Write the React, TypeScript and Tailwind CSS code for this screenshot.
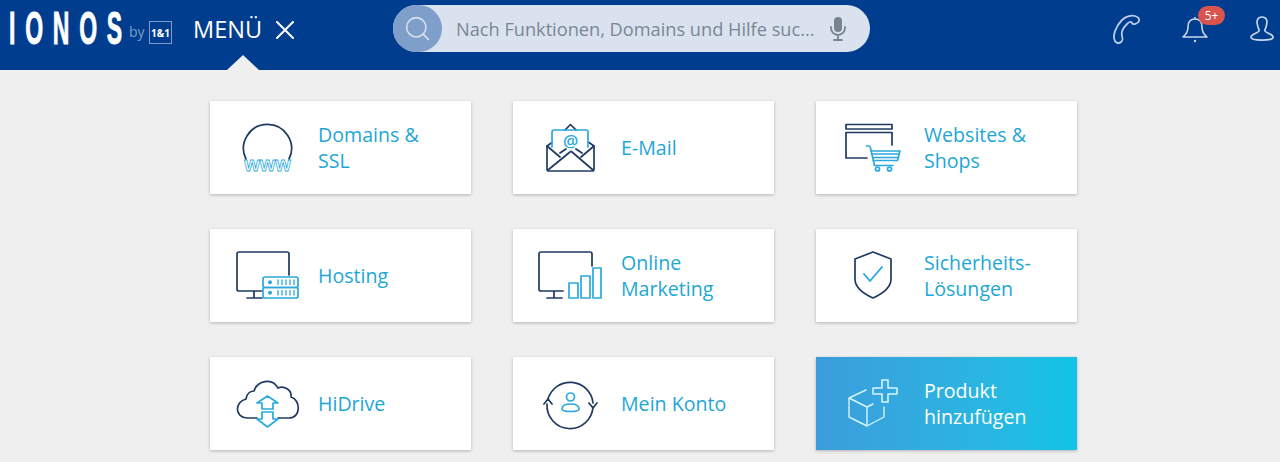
import type { ReactNode } from "react";
import { Search } from "lucide-react";

const DARK = "#1f3a63";
const LIGHT = "#2aa9dc";

// All card icons share one 108x93 box, so coordinates are relative to the card corner.
const Icon = ({ children }: { children: ReactNode }) => (
  <svg viewBox="0 0 108 93" className="h-[93px] w-[108px] shrink-0" fill="none" strokeWidth="1.7" strokeLinecap="round" strokeLinejoin="round" aria-hidden>
    {children}
  </svg>
);

const DomainsIcon = () => (
  <Icon>
    <path d="M36 58 A24 24 0 1 1 79 58" stroke={DARK} />
    <text x="57.5" y="70" textAnchor="middle" fontFamily="'Liberation Sans', sans-serif" fontSize="20" fontWeight="700" fill="#fff" stroke={LIGHT} strokeWidth="0.8">www</text>
  </Icon>
);

const MailIcon = () => (
  <Icon>
    <path d="M34 45 V68 Q34 70 36 70 H79 Q81 70 81 68 V45 M34 45 L39 41.5 M81 45 L76 41.5 M52 29 L57 24 Q57.5 23 58 24 L63 29" stroke={DARK} />
    <path d="M39 46 V31 Q39 29 41 29 H73 Q75 29 75 31 V46" stroke={LIGHT} />
    <path d="M34 45 L47 56 M81 45 L68 56" stroke={DARK} />
    <path d="M35 69 L57 51 Q58 50 59 51 L80 69 M47 52 L53 48 M69 52 L63 48" stroke={DARK} />
    <text x="57.5" y="45.5" textAnchor="middle" fontFamily="'Open Sans', sans-serif" fontSize="17" fontWeight="600" fill={LIGHT}>@</text>
  </Icon>
);

const ShopIcon = () => (
  <Icon>
    <rect x="30" y="23.5" width="46" height="4.5" stroke={DARK} />
    <path d="M30 57 V31.5 H76 V44 M30 57 H51" stroke={DARK} />
    <path d="M50.5 45 H53 Q54 45 54.5 47 L58.5 64.5 H77" stroke={LIGHT} />
    <path d="M55 50 H84 L81.5 59.5 H57.5 M56 53 H83 M57 56.5 H82" stroke={LIGHT} />
    <circle cx="61.5" cy="68" r="2" stroke={LIGHT} />
    <circle cx="73.5" cy="68" r="2" stroke={LIGHT} />
  </Icon>
);

const HostingIcon = () => (
  <Icon>
    <path d="M52 62 H29 Q27 62 27 60 V25 Q27 23 29 23 H77 Q79 23 79 25 V46 M44 62 V69 M37 69 H52" stroke={DARK} />
    <rect x="53" y="48" width="35" height="10.5" rx="2" stroke={LIGHT} />
    <rect x="53" y="58.5" width="35" height="10.5" rx="2" stroke={LIGHT} />
    <circle cx="60" cy="53.2" r="1.2" fill={LIGHT} stroke={LIGHT} />
    <circle cx="60" cy="63.8" r="1.2" fill={LIGHT} stroke={LIGHT} />
    <path d="M68 51 V55.5 M72 51 V55.5 M76 51 V55.5 M80 51 V55.5 M84 51 V55.5 M68 61.5 V66 M72 61.5 V66 M76 61.5 V66 M80 61.5 V66 M84 61.5 V66" stroke={LIGHT} strokeWidth="1.3" />
  </Icon>
);

const MarketingIcon = () => (
  <Icon>
    <path d="M50 62 H28 Q26 62 26 60 V25 Q26 23 28 23 H77 Q79 23 79 25 V37 M41 62 V69 M34 69 H49" stroke={DARK} />
    <rect x="56" y="54" width="9" height="15" stroke={LIGHT} />
    <rect x="68" y="47" width="9" height="22" stroke={LIGHT} />
    <rect x="80" y="39" width="8" height="30" stroke={LIGHT} />
  </Icon>
);

const ShieldIcon = () => (
  <Icon>
    <path d="M57 23 L75 30 V50 Q75 61 57 69 Q39 61 39 50 V30 Z" stroke={DARK} />
    <path d="M48 45 L54 52 L66 38" stroke={LIGHT} strokeWidth="1.9" />
  </Icon>
);

const CloudIcon = () => (
  <Icon>
    <path d="M47 61 H37 C25 61 24 45 36 42 C37 36 41 34 44 34 C47 24 62 20 68 31 C74 28 82 33 81 40 C91 43 91 61 79 61 H68" stroke={DARK} />
    <path d="M47 46 L57.5 39 L68 46 H63 V52 H52 V46 Z" stroke={LIGHT} />
    <path d="M52 55 H63 V62 H68 L57.5 70 L47 62 H52 Z" stroke={LIGHT} />
  </Icon>
);

const AccountIcon = () => (
  <Icon>
    <path d="M80 46 A23 23 0 0 0 35 42" stroke={DARK} />
    <path d="M34 47 A23 23 0 0 0 80 50" stroke={DARK} />
    <path d="M31 47 L35 42 L39 47 M76 46 L80 51 L84 46" stroke={DARK} />
    <circle cx="57.5" cy="40" r="4" stroke={LIGHT} />
    <path d="M49 52 C49 48 53 47 57.5 47 C62 47 66 48 66 52 C66 54 62 54.5 57.5 54.5 C53 54.5 49 54 49 52 Z" stroke={LIGHT} />
  </Icon>
);

const AddIcon = () => (
  <Icon>
    <g stroke="#d8f4fb" strokeWidth="1.4">
      <path d="M50 33 L33 41 L51 50 L57 47 M33 41 V60 L51 69 V50 M51 69 L68 60 V50" />
      <path d="M66 23 H72 V31 H81 V37 H72 V45 H66 V37 H57 V31 H66 Z" strokeWidth="1.6" />
    </g>
  </Icon>
);

const cards = [
  { lines: ["Domains &", "SSL"], icon: <DomainsIcon /> },
  { lines: ["E-Mail"], icon: <MailIcon /> },
  { lines: ["Websites &", "Shops"], icon: <ShopIcon /> },
  { lines: ["Hosting"], icon: <HostingIcon /> },
  { lines: ["Online", "Marketing"], icon: <MarketingIcon /> },
  { lines: ["Sicherheits-", "Lösungen"], icon: <ShieldIcon /> },
  { lines: ["HiDrive"], icon: <CloudIcon /> },
  { lines: ["Mein Konto"], icon: <AccountIcon /> },
  { lines: ["Produkt", "hinzufügen"], icon: <AddIcon />, accent: true },
];

const Logo = () => (
  <div className="flex h-[36px] items-end">
    <svg viewBox="0 0 113 36" className="h-[36px] w-[113px] overflow-visible" aria-label="IONOS">
      <text transform="translate(0 35) scale(0.5 1)" fontFamily="'Liberation Sans', sans-serif" fontSize="46" fontWeight="700" fill="#fff" stroke="#fff" strokeWidth="1">
        <tspan letterSpacing="19.5">IONO</tspan>
        <tspan>S</tspan>
      </text>
    </svg>
    <span className="mb-[5px] ml-[7px] w-[15px] text-[14px] leading-[16px] text-[#7f9dc8]">by</span>
    <span className="mb-px ml-[5px] flex h-[23px] w-[23px] items-center justify-center border border-[#7f9dc8] text-[10px] font-bold leading-none text-white">1&amp;1</span>
  </div>
);

const Header = () => (
  <header className="relative flex h-[70px] items-start overflow-hidden bg-[#003d8f] pl-[9px]">
    <div className="mt-[9px]">
      <Logo />
    </div>
    <span className="ml-[21px] mt-[13px] w-[69px] whitespace-nowrap text-[23.5px] font-medium leading-[33px] text-white">MENÜ</span>
    <svg viewBox="0 0 18 18" className="ml-[14px] mt-[21px] h-[18px] w-[18px]" fill="none" stroke="#fff" strokeWidth="2" strokeLinecap="round" aria-hidden>
      <path d="M1 1 L17 17 M17 1 L1 17" />
    </svg>
    <div className="ml-[99px] mt-[5px] flex h-[47px] w-[477px] items-center rounded-full bg-[#d9e2ee]">
      <span className="flex h-[47px] w-[49px] shrink-0 items-center justify-center rounded-full bg-[#7f9fcb]">
        <Search className="h-[29px] w-[29px] text-[#d9e2ee]" strokeWidth={1.3} />
      </span>
      <span className="ml-[14px] w-[361px] whitespace-nowrap text-[18.2px] leading-[24px] text-[#7b8794]">Nach Funktionen, Domains und Hilfe suc...</span>
      <svg viewBox="0 0 16 24" className="ml-[13px] h-[24px] w-[16px]" fill="none" stroke="#78838f" strokeWidth="1.8" strokeLinecap="round" aria-hidden>
        <rect x="4" y="0" width="8" height="15" rx="4" fill="#78838f" stroke="none" />
        <path d="M1 10 V11 A7 7 0 0 0 15 11 V10 M8 18 V23 M4 23 H12" />
      </svg>
    </div>
    <svg viewBox="0 0 32 32" className="ml-[241px] mt-[14px] h-[32px] w-[32px]" fill="none" stroke="#b9cde6" strokeWidth="1.8" strokeLinejoin="round" aria-hidden>
      <path d="M4 27 C1 22 5 12 11 6 C15 2 21 1 24 2 C27 3 29 5 28 7 C27 10 22 11 21 9 C20 7 18 8 16 10 C12 14 10 19 11 22 C12 25 12 26 10 28 C8 30 5 29 4 27 Z" />
    </svg>
    <div className="relative ml-[37px] mt-[15px] h-[30px] w-[30px]">
      <svg viewBox="0 0 30 30" className="h-[30px] w-[30px]" fill="none" stroke="#c9d8ec" strokeWidth="1.6" strokeLinejoin="round" aria-hidden>
        <path d="M3 22 Q8 18 8 12 Q8 4 15 4 Q22 4 22 12 Q22 18 27 22 Z M15 2 V4" />
        <circle cx="15" cy="26" r="1.2" fill="#c9d8ec" stroke="none" />
      </svg>
      <span className="absolute left-[18px] top-[-9px] flex h-[19px] w-[27px] items-center justify-center rounded-full bg-[#d9534f] text-[12px] leading-none text-white">5+</span>
    </div>
    <svg viewBox="0 0 26 30" className="ml-[40px] mt-[15px] h-[28px] w-[24px]" fill="none" stroke="#c9d8ec" strokeWidth="1.8" strokeLinejoin="round" aria-hidden>
      <path d="M13 2 C8 2 7 6 8 10 C8.5 14 10 15 10 17 C10 19 1 20 1 24 C1 26 5 27 13 27 C21 27 25 26 25 24 C25 20 16 19 16 17 C16 15 17.5 14 18 10 C19 6 18 2 13 2 Z" />
    </svg>
    {/* Caret pointing at the open menu */}
    <span className="absolute bottom-0 left-[227px] h-0 w-0 border-x-[16px] border-b-[15px] border-x-transparent border-b-[#efefef]" />
  </header>
);

export default function App() {
  return (
    <div className="h-[462px] overflow-hidden bg-[#efefef] font-['Open_Sans',sans-serif]">
      <Header />
      <main className="ml-[210px] mt-[31px] grid w-[867px] grid-cols-3 gap-x-[42px] gap-y-[35px]">
        {cards.map((card) => (
          <a
            key={card.lines[0]}
            className={
              card.accent
                ? "flex h-[93px] items-center bg-gradient-to-r from-[#3b9ddb] to-[#12c3e6] text-white shadow-[0_1px_3px_rgba(0,0,0,0.25)]"
                : "flex h-[93px] items-center bg-white text-[#1ea6d6] shadow-[0_1px_3px_rgba(0,0,0,0.25)]"
            }
          >
            {card.icon}
            <span className={card.accent ? "text-[19.6px] font-medium leading-[26px]" : "text-[19.6px] leading-[26px]"}>
              {card.lines.map((line) => (
                <span key={line} className="block">{line}</span>
              ))}
            </span>
          </a>
        ))}
      </main>
    </div>
  );
}
